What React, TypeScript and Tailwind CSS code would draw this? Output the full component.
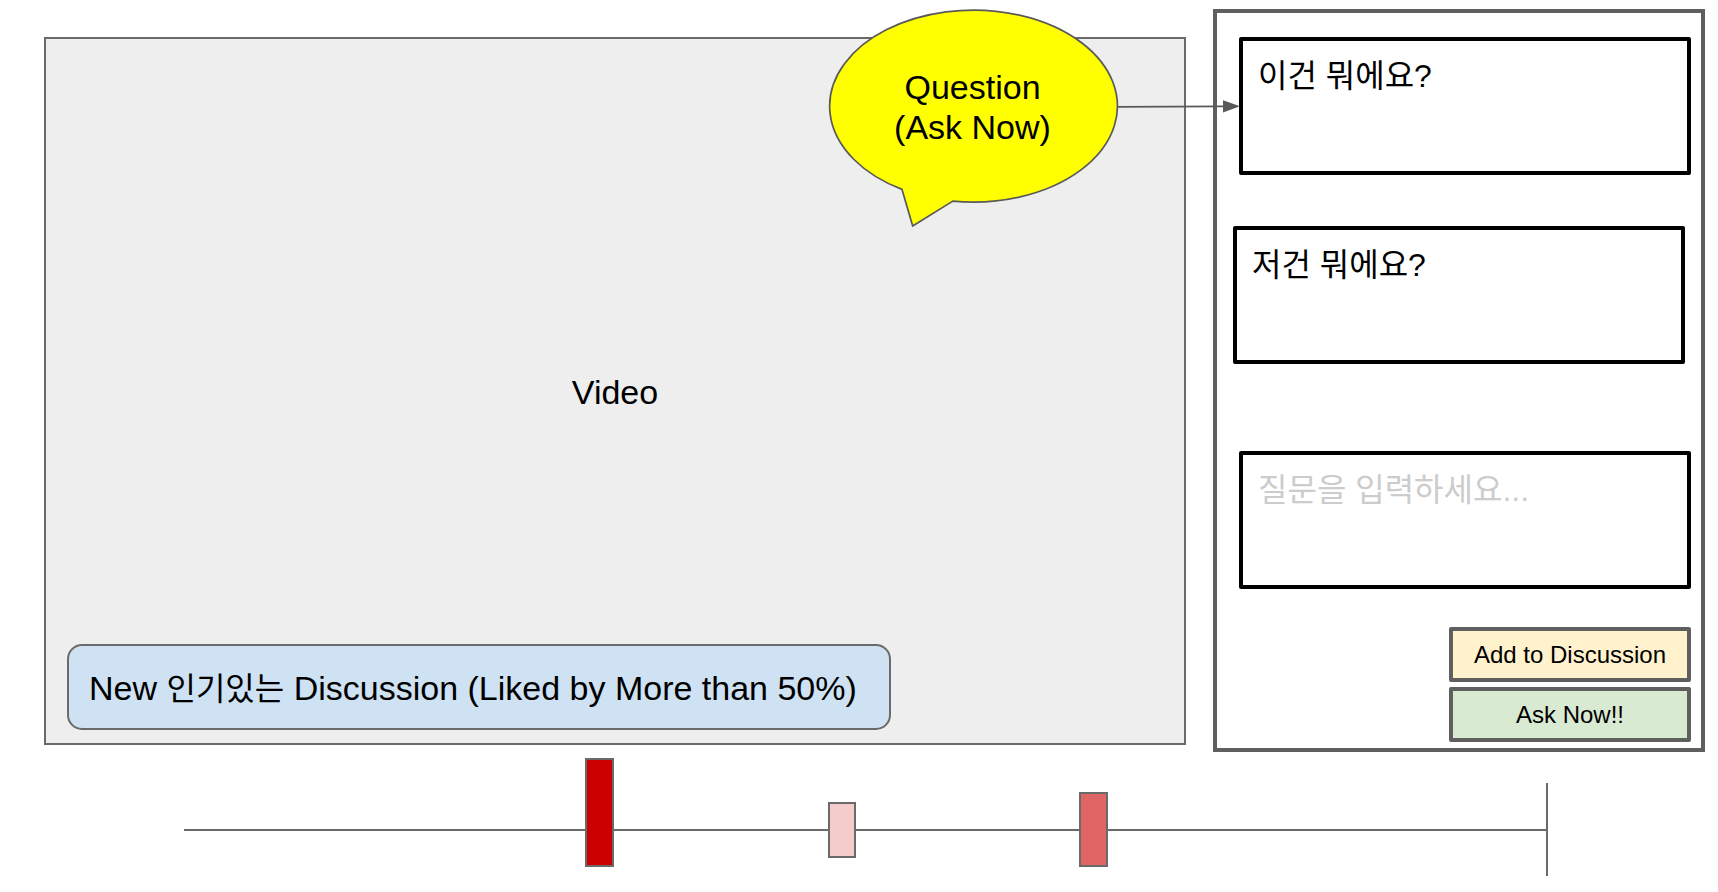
type Marker = { id: string; at: number; shape: string };

const markers: Marker[] = [
  { id: "high", at: 29.4, shape: "top-0 h-[109px] w-[29px] bg-[#cc0000]" },
  { id: "low", at: 47.2, shape: "top-11 h-14 w-7 bg-[#f4cccc]" },
  { id: "medium", at: 65.6, shape: "top-[34px] h-[75px] w-[29px] bg-[#e06666]" },
];

const card = "h-[138px] rounded-xs border-4 border-black bg-white px-[15px] pt-[15px] text-[32px] leading-10";
const action = "h-[55px] w-[242px] rounded-xs border-4 border-[#5f5f5f] text-2xl";

function QuestionCallout() {
  return (
    <div className="absolute -top-[31px] -right-[57px] z-10 w-[414px]">
      <svg viewBox="827 8 414 220" className="block h-[220px] w-[414px]" aria-hidden="true">
        <path
          d="M912.7 226 L902 189.4 A143.9 96 0 1 1 952.8 201.1 Z"
          fill="#ffff00"
          stroke="#595959"
          strokeWidth="1.7"
          strokeLinejoin="round"
        />
        <path d="M1117 106.9 L1224 106.3" stroke="#595959" strokeWidth="1.7" />
        <path d="M1223 100.2 L1240 106.2 L1223 112.6 Z" fill="#595959" />
      </svg>
      <p className="absolute top-0 left-0 flex h-[198px] w-[291px] flex-col items-center justify-center text-center text-[34px] leading-10">
        <span>Question</span>
        <span>(Ask Now)</span>
      </p>
    </div>
  );
}

function VideoArea() {
  return (
    <section className="relative mt-7 mb-[7px] grid min-w-0 flex-1 border-2 border-[#6a6a6a] bg-[#eeeeee]">
      <h1 className="col-start-1 row-start-1 place-self-center pt-0.5 text-[34px] leading-10">Video</h1>
      <div className="col-start-1 row-start-1 mb-[13px] ml-[21px] flex h-[86px] w-[824px] items-center self-end rounded-[15px] border-2 border-[#6a6a6a] bg-[#cfe2f3] px-5 pt-0.5">
        <p className="text-[34px] leading-10 whitespace-nowrap">
          New <span className="text-[32px]">인기있는</span> Discussion (Liked by More than 50%)
        </p>
      </div>
      <QuestionCallout />
    </section>
  );
}

function QuestionPanel() {
  return (
    <aside className="flex w-[492px] shrink-0 flex-col border-4 border-[#5f5f5f] bg-white pt-6 pr-2.5 pb-1.5 pl-4">
      <article className={`ml-1.5 ${card}`}>이건 뭐에요?</article>
      <article className={`mt-[51px] mr-1.5 ${card}`}>저건 뭐에요?</article>
      <form className="mt-[87px] flex flex-col" onSubmit={(e) => e.preventDefault()}>
        <textarea
          aria-label="질문을 입력하세요..."
          placeholder="질문을 입력하세요..."
          className={`ml-1.5 block resize-none outline-none placeholder:text-[#cccccc] ${card}`}
        />
        <div className="mt-[38px] flex flex-col items-end gap-[5px]">
          <button type="button" className={`bg-[#fff2cc] ${action}`}>
            Add to Discussion
          </button>
          <button type="submit" className={`bg-[#d9ead3] ${action}`}>
            Ask Now!!
          </button>
        </div>
      </form>
    </aside>
  );
}

function Timeline() {
  return (
    <div className="relative mt-1.5 mr-[170px] ml-[184px] h-[118px]">
      <div className="absolute inset-x-0 top-[71px] h-0.5 bg-[#6a6a6a]" />
      <div className="absolute top-[25px] right-0 h-[93px] w-0.5 bg-[#6a6a6a]" />
      {markers.map((m) => (
        <div
          key={m.id}
          className={`absolute border-2 border-[#6a6a6a] ${m.shape}`}
          style={{ left: `${m.at}%` }}
        />
      ))}
    </div>
  );
}

export default function App() {
  return (
    <div className="min-h-screen bg-white pt-[9px] font-['Liberation_Sans','Noto_Sans_CJK_KR',sans-serif] text-black">
      <main className="flex gap-[27px] pr-[13px] pl-11">
        <VideoArea />
        <QuestionPanel />
      </main>
      <Timeline />
    </div>
  );
}
